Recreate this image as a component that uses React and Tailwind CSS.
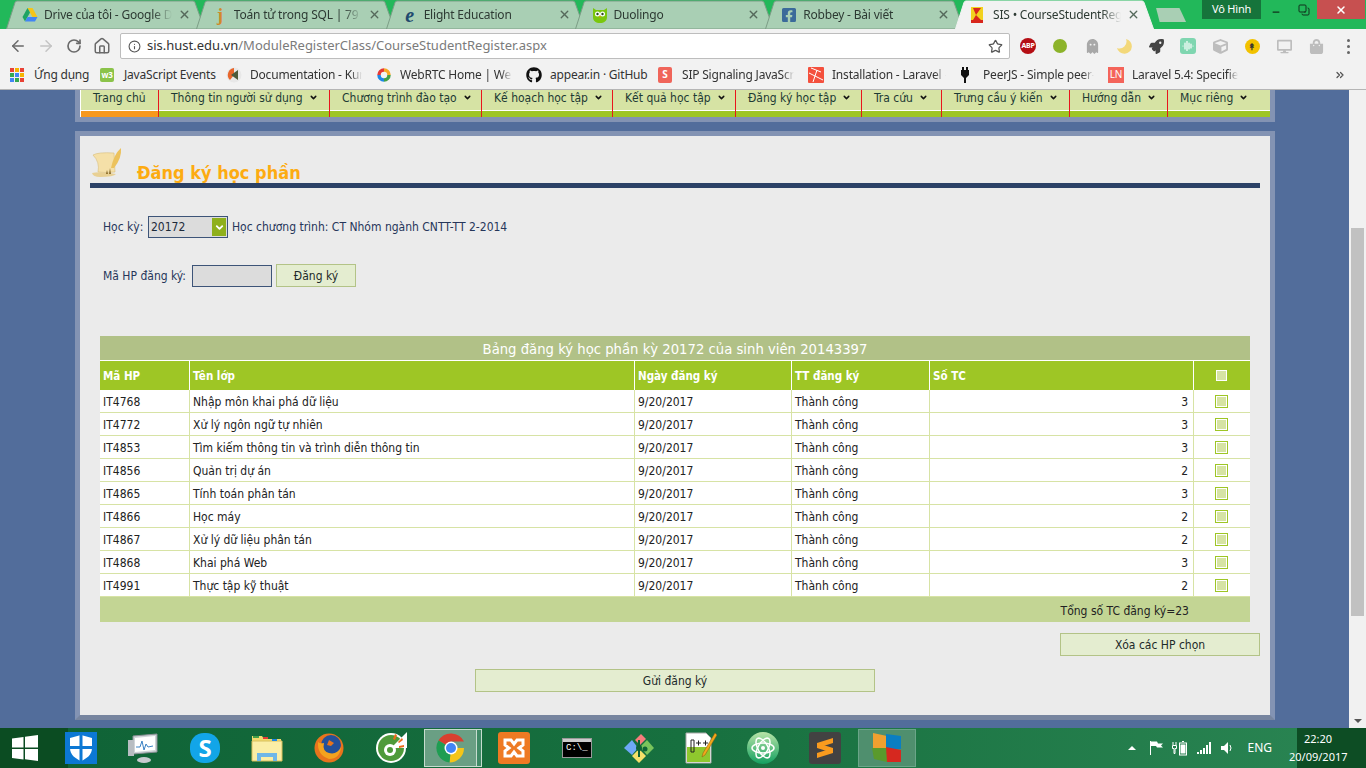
import React from 'react';
import { ArrowLeft, ArrowRight, RotateCw, Home, Star, Info, X, Minus, ChevronDown, ChevronsRight, Copy } from 'lucide-react';
import { FaGithub, FaFacebookSquare, FaRocket, FaGhost, FaShoppingBag, FaCube, FaDesktop } from 'react-icons/fa';

const uiFont = "font-['Noto_Sans',sans-serif] tracking-[-0.2px]";
const pageFont = "font-['DejaVu_Sans_Condensed','DejaVu_Sans',sans-serif] [font-stretch:condensed]";

const DriveIcon = () => (
  <svg width="16" height="16" viewBox="0 0 16 16">
    <path d="M5.500 1h5l5 9h-5z" fill="#f5c518" />
    <path d="M5.500 1L0.500 10l2.500 4.500 5-9z" fill="#1fa463" />
    <path d="M3 14.500h10l2.500-4.500h-10z" fill="#4285f4" />
  </svg>
);

const Duolingo = () => (
  <svg width="18" height="18" viewBox="0 0 18 18">
    <path d="M2 2l3 2h8l3-2v9c0 4-3 6-7 6s-7-2-7-6z" fill="#7ac70c" />
    <circle cx="6.500" cy="8" r="2.500" fill="#fff" />
    <circle cx="11.500" cy="8" r="2.500" fill="#fff" />
    <circle cx="6.500" cy="8" r="1.200" fill="#2a4a1a" />
    <circle cx="11.500" cy="8" r="1.200" fill="#2a4a1a" />
    <path d="M8 10h2l-1 2z" fill="#f49000" />
  </svg>
);

const SisIcon = () => (
  <svg width="12" height="16" viewBox="0 0 12 16">
    <rect width="12" height="16" fill="#f2d21f" />
    <path d="M2 1h8L5 8l5 5H2l3-5z" fill="#d8261c" />
    <rect y="13" width="12" height="3" fill="#d8261c" />
  </svg>
);

const tabs = [
  { title: 'Drive của tôi - Google D', icon: <DriveIcon /> },
  { title: 'Toán tử trong SQL | 79 b', icon: <span className="w-4 text-center text-[18px] leading-none font-bold text-[#d08a2a] font-['Liberation_Serif',serif]">j</span> },
  { title: 'Elight Education', icon: <span className="w-4 text-center text-[20px] leading-none font-bold italic text-[#1f4a6e] font-['Liberation_Serif',serif]">e</span> },
  { title: 'Duolingo', icon: <Duolingo /> },
  { title: 'Robbey - Bài viết', icon: <FaFacebookSquare size={16} color="#3b6a9a" /> },
  { title: 'SIS • CourseStudentRegi', icon: <SisIcon />, active: true },
];

function Tab({ tab, first }) {
  const fill = tab.active ? '#f2f2f2' : '#a9cfb4';
  return (
    <div className={`relative flex h-[29px] w-[199px] shrink-0 items-center pl-[16px] pr-[14px] ${first ? '' : '-ml-[9.200px]'} ${tab.active ? 'z-10' : ''}`}>
      <svg className="absolute inset-0" width="199" height="29" viewBox="0 0 199 29">
        <path d="M0.500 29L9 2.500Q9.500 1 11 1H187Q188.500 1 189 2.500L198.500 29Z" fill={fill} stroke={tab.active ? '#f2f2f2' : '#7c9d86'} />
      </svg>
      <div className="relative flex min-w-0 flex-1 items-center">
        <span className="flex w-[22px] shrink-0 items-center">{tab.icon}</span>
        <span className="w-[128px] overflow-hidden whitespace-nowrap text-[12px] text-[#2d3a33] [mask-image:linear-gradient(to_right,black_85%,transparent)]">{tab.title}</span>
        <X size={13} strokeWidth={2.500} className="ml-auto text-[#55695b]" />
      </div>
    </div>
  );
}

const AppsIcon = () => (
  <div className="grid w-[14px] grid-cols-3 gap-[1px]">
    {['#e94235', '#f6b400', '#e94235', '#34a853', '#4285f4', '#f6b400', '#4285f4', '#34a853', '#e94235'].map((c, i) => (
      <span key={i} className="h-[4px] w-[4px]" style={{ background: c }} />
    ))}
  </div>
);

const W3Icon = () => (
  <span className="flex h-[14px] w-[14px] items-center justify-center rounded-[2px] bg-[#8bc34a] text-[8px] font-bold text-white">w3</span>
);

const KendoIcon = () => (
  <svg width="16" height="16" viewBox="0 0 16 16">
    <circle cx="8" cy="8" r="7.500" fill="#e8e8e8" />
    <path d="M8 1a7 7 0 0 0-4 12l4-5z" fill="#e8662c" />
    <path d="M5 8l7-5v10z" fill="#4d5a3a" />
  </svg>
);

const WebrtcIcon = () => (
  <svg width="16" height="16" viewBox="0 0 16 16" fill="none" strokeWidth="3.500">
    <path d="M3 8a5 5 0 0 1 5-5" stroke="#e53935" />
    <path d="M8 3a5 5 0 0 1 5 5" stroke="#f9a825" />
    <path d="M13 8a5 5 0 0 1-5 5" stroke="#43a047" />
    <path d="M8 13a5 5 0 0 1-5-5" stroke="#1e88e5" />
  </svg>
);

const SipIcon = () => (
  <span className="flex h-[16px] w-[14px] items-center justify-center rounded-[2px] bg-[#f0655a] text-[10px] font-bold text-white">S</span>
);

const LaravelIcon = () => (
  <svg width="16" height="16" viewBox="0 0 16 16">
    <rect width="16" height="16" rx="1" fill="#f4503d" />
    <path d="M3 1l10 4M1 6l14 7M9 3l-4 12" stroke="#fff" strokeWidth="1" />
  </svg>
);

const PeerIcon = () => (
  <svg width="10" height="16" viewBox="0 0 10 16">
    <path d="M2 0h2v3h2V0h2v3h1v5L6 11v5H4v-5L1 8V3h1z" fill="#111" />
  </svg>
);

const LnIcon = () => (
  <span className="flex h-[16px] w-[16px] items-center justify-center bg-[#f4645a] text-[10px] text-white">LN</span>
);

const bookmarks = [
  { title: 'Ứng dụng', icon: <AppsIcon />, iw: 24, w: 66, full: true },
  { title: 'JavaScript Events', icon: <W3Icon />, iw: 24, w: 102, full: true },
  { title: 'Documentation - Kur', icon: <KendoIcon />, iw: 24, w: 126 },
  { title: 'WebRTC Home | Web', icon: <WebrtcIcon />, iw: 24, w: 126 },
  { title: 'appear.in · GitHub', icon: <FaGithub size={16} color="#111" />, iw: 24, w: 108, full: true },
  { title: 'SIP Signaling JavaScri', icon: <SipIcon />, iw: 24, w: 126 },
  { title: 'Installation - Laravel -', icon: <LaravelIcon />, iw: 24, w: 128 },
  { title: 'PeerJS - Simple peer-', icon: <PeerIcon />, iw: 23, w: 125 },
  { title: 'Laravel 5.4: Specified', icon: <LnIcon />, iw: 24, w: 120 },
];

const ChromeBar = () => (
  <div className={`flex h-[90px] shrink-0 flex-col ${uiFont}`}>
    <div className="flex h-[29px] items-start bg-[#22b85a] pl-[6px]">
      {tabs.map((t, i) => <Tab key={t.title} tab={t} first={i === 0} />)}
      <div className="ml-[2px] mt-[8px] h-[14px] w-[30px] bg-[#a9cfb4] [clip-path:polygon(0_0,78%_0,100%_100%,12%_100%)]" />
      <div className="ml-[16px] flex h-[19px] w-[59px] items-center justify-center bg-[#16743b] text-[11px] text-white">Vô Hình</div>
      <div className="flex h-[19px] w-[56px] items-center pl-[10px]">
        <Minus size={10} strokeWidth={3} className="mt-[5px] text-[#10301c]" />
        <Copy size={12} strokeWidth={2} className="ml-[17px] -scale-x-100 -scale-y-100 text-[#10301c]" />
      </div>
      <div className="flex h-[19px] w-[48px] items-center justify-center bg-[#c75050]"><X size={12} strokeWidth={3} className="text-white" /></div>
    </div>
    <div className="flex h-[31px] items-start bg-[#f2f2f2] pl-[9px] pt-[4px]">
      <ArrowLeft size={18} strokeWidth={2} className="mt-[4px] text-[#6a6a6a]" />
      <ArrowRight size={18} strokeWidth={2} className="ml-[10px] mt-[4px] text-[#c4c4c4]" />
      <RotateCw size={16} strokeWidth={2.500} className="ml-[11px] mt-[5px] text-[#6a6a6a]" />
      <Home size={18} strokeWidth={2} className="ml-[11px] mt-[4px] text-[#6a6a6a]" />
      <div className="ml-[9px] flex h-[26px] w-[890px] shrink-0 items-center rounded-[2px] border border-[#bdbdbd] bg-white pl-[7px] pr-[6px]">
        <Info size={13} strokeWidth={2} className="text-[#555]" />
        <span className="ml-[6px] text-[13px] tracking-normal text-[#333]">sis.hust.edu.vn<span className="text-[#7b7b7b]">/ModuleRegisterClass/CourseStudentRegister.aspx</span></span>
        <Star size={15} strokeWidth={2} className="ml-auto text-[#555]" />
      </div>
      <div className="ml-[2px] mt-[5px] flex items-center">
        <div className="flex w-[32px] justify-center">
          <span className="flex h-[16px] w-[16px] items-center justify-center rounded-full bg-[#b50e14] text-[7px] font-bold text-white">ABP</span>
        </div>
        <div className="flex w-[32px] justify-center"><span className="h-[14px] w-[14px] rounded-full bg-[#8cb32a]" /></div>
        <div className="flex w-[32px] justify-center"><FaGhost size={15} color="#a8a8a8" /></div>
        <div className="flex w-[32px] justify-center">
          <svg width="16" height="16" viewBox="0 0 16 16"><path d="M10 1a7.500 7.500 0 1 1-9 9a7 7 0 0 0 9-9z" fill="#f3d87a" /></svg>
        </div>
        <div className="flex w-[32px] justify-center"><FaRocket size={15} color="#444" /></div>
        <div className="flex w-[32px] justify-center">
          <span className="flex h-[16px] w-[16px] items-center justify-center rounded-[3px] bg-[#7fd6b0]">
            <svg width="12" height="10" viewBox="0 0 12 10"><path d="M1 5v0M3 2v6M5 0v10M7 2v6M9 3v4M11 5v0" stroke="#fff" strokeWidth="1.200" strokeLinecap="round" /></svg>
          </span>
        </div>
        <div className="flex w-[32px] justify-center"><FaCube size={15} color="#bdbdbd" /></div>
        <div className="flex w-[32px] justify-center">
          <span className="flex h-[15px] w-[15px] items-center justify-center rounded-full bg-[#f2c200] text-[9px] font-bold leading-none text-[#333]">↟</span>
        </div>
        <div className="flex w-[32px] justify-center"><FaDesktop size={15} color="#bdbdbd" /></div>
        <div className="flex w-[32px] justify-center"><FaShoppingBag size={15} color="#bdbdbd" /></div>
        <div className="flex w-[32px] flex-col items-center gap-[3px]">
          <span className="h-[3px] w-[3px] rounded-full bg-[#666]" />
          <span className="h-[3px] w-[3px] rounded-full bg-[#666]" />
          <span className="h-[3px] w-[3px] rounded-full bg-[#666]" />
        </div>
      </div>
    </div>
    <div className="flex h-[30px] items-center border-b border-[#b5b5b5] bg-[#f2f2f2] pl-[10px]">
      {bookmarks.map((b) => (
        <div key={b.title} className="flex items-center" style={{ width: b.iw + b.w }}>
          <span className="flex shrink-0 items-center" style={{ width: b.iw }}>{b.icon}</span>
          {b.full ? (
            <span className="whitespace-nowrap text-[12px] text-[#333]">{b.title}</span>
          ) : (
            <span className="overflow-hidden whitespace-nowrap text-[12px] text-[#333] [mask-image:linear-gradient(to_right,black_90%,transparent)]" style={{ width: b.w - 14 }}>{b.title}</span>
          )}
        </div>
      ))}
      <ChevronsRight size={12} strokeWidth={2.500} className="ml-[82px] text-[#555]" />
    </div>
  </div>
);

const navItems = [
  { label: 'Trang chủ', w: 'w-[78px]', active: true },
  { label: 'Thông tin người sử dụng', w: 'w-[171px]', caret: true },
  { label: 'Chương trình đào tạo', w: 'w-[152px]', caret: true },
  { label: 'Kế hoạch học tập', w: 'w-[131px]', caret: true },
  { label: 'Kết quả học tập', w: 'w-[123px]', caret: true },
  { label: 'Đăng ký học tập', w: 'w-[126px]', caret: true },
  { label: 'Tra cứu', w: 'w-[80px]', caret: true },
  { label: 'Trưng cầu ý kiến', w: 'w-[128px]', caret: true },
  { label: 'Hướng dẫn', w: 'w-[98px]', caret: true },
  { label: 'Mục riêng', w: 'w-[102px]', caret: true, last: true },
];

const NavBar = () => (
  <div className={`border-x-[5px] border-b-[5px] border-x-[#8393b3] border-b-[#8393b3] bg-white ${pageFont}`}>
    <div className="flex pl-[1px]">
      {navItems.map((n) => (
        <div key={n.label} className={`flex ${n.w} flex-col ${n.last ? '' : 'border-r border-r-[#e8161d]'}`}>
          <div className="flex h-[20px] items-center gap-[6px] bg-[#d6e3a4] pb-[5px] pl-[12px] text-[12px] text-[#1d3a34]">
            <span>{n.label}</span>
            {n.caret && <ChevronDown size={9} strokeWidth={4} className="text-[#111]" />}
          </div>
          <div className={`mt-[1px] h-[6px] ${n.active ? 'bg-[#f7981d]' : 'bg-[#9ec625]'}`} />
        </div>
      ))}
    </div>
  </div>
);

const rows = [
  ['IT4768', 'Nhập môn khai phá dữ liệu', 3],
  ['IT4772', 'Xử lý ngôn ngữ tự nhiên', 3],
  ['IT4853', 'Tìm kiếm thông tin và trình diễn thông tin', 3],
  ['IT4856', 'Quản trị dự án', 2],
  ['IT4865', 'Tính toán phân tán', 3],
  ['IT4866', 'Học máy', 2],
  ['IT4867', 'Xử lý dữ liệu phân tán', 2],
  ['IT4868', 'Khai phá Web', 3],
  ['IT4991', 'Thực tập kỹ thuật', 2],
];

const RegTable = () => (
  <table className="ml-[10px] w-[1150px] table-fixed border-separate border-spacing-0 text-[12px] text-[#222]">
    <colgroup>
      <col className="w-[89px]" />
      <col className="w-[445px]" />
      <col className="w-[157px]" />
      <col className="w-[138px]" />
      <col className="w-[264px]" />
      <col className="w-[57px]" />
    </colgroup>
    <thead>
      <tr className="h-[25px]">
        <th colSpan={6} className="border-b border-b-white bg-[#b1c187] p-0 pt-[2px] text-center text-[14.700px] font-normal text-white">Bảng đăng ký học phần kỳ 20172 của sinh viên 20143397</th>
      </tr>
      <tr className="h-[29px] bg-[#9ec625] text-left text-[11.500px] font-bold text-white">
        <th className="pl-[3px] pt-[3px] font-bold">Mã HP</th>
        <th className="border-l border-l-white pl-[3px] pt-[3px] font-bold">Tên lớp</th>
        <th className="border-l border-l-white pl-[3px] pt-[3px] font-bold">Ngày đăng ký</th>
        <th className="border-l border-l-white pl-[3px] pt-[3px] font-bold">TT đăng ký</th>
        <th className="border-l border-l-white pl-[3px] pt-[3px] font-bold">Số TC</th>
        <th className="border-l border-l-white">
          <span className="ml-[22px] block h-[11px] w-[11px] border border-white bg-[#d6e3a4]" />
        </th>
      </tr>
    </thead>
    <tbody className="bg-white">
      {rows.map((r) => (
        <tr key={r[0]} className="h-[23px]">
          <td className="border-b border-b-[#d7e3a5] pl-[3px] pt-[2px]">{r[0]}</td>
          <td className="border-b border-l border-b-[#d7e3a5] border-l-[#d7e3a5] pl-[3px] pt-[2px]">{r[1]}</td>
          <td className="border-b border-l border-b-[#d7e3a5] border-l-[#d7e3a5] pl-[3px] pt-[2px]">9/20/2017</td>
          <td className="border-b border-l border-b-[#d7e3a5] border-l-[#d7e3a5] pl-[3px] pt-[2px]">Thành công</td>
          <td className="border-b border-l border-b-[#d7e3a5] border-l-[#d7e3a5] pr-[5px] pt-[2px] text-right">{r[2]}</td>
          <td className="border-b border-l border-b-[#d7e3a5] border-l-[#d7e3a5]">
            <span className="ml-[21px] block h-[13px] w-[13px] border border-[#9ec625] bg-[#d6e3a4] outline outline-1 -outline-offset-2 outline-white" />
          </td>
        </tr>
      ))}
    </tbody>
    <tfoot>
      <tr className="h-[25px] bg-[#c3d594]">
        <td colSpan={6} className="pr-[61px] pt-[2px] text-right">Tổng số TC đăng ký=23</td>
      </tr>
    </tfoot>
  </table>
);

const ScrollIcon = () => (
  <svg width="33" height="31" viewBox="0 0 33 31" className="shrink-0">
    <path d="M3 7Q8 4 24 5L25 24Q14 25 8 24Q10 14 3 7z" fill="#f5e0a8" stroke="#d9bd7a" strokeWidth="0.600" />
    <path d="M2 25Q10 23 26 26Q24 29 10 29Q3 29 2 25z" fill="#e8d094" />
    <path d="M21 20Q24 6 31 0Q32 10 24 20z" fill="#ecc25c" />
    <path d="M19 26l1-6 1 6zM16 26l1-4 1 4z" fill="#8a6b2a" />
  </svg>
);

const FormButton = ({ className, children }) => (
  <button className={`flex items-center justify-center border border-[#b3c387] bg-[#e4edd0] text-[12px] text-[#1d2a2a] ${className}`}>{children}</button>
);

const Panel = () => (
  <div className={`mt-[9px] border-[5px] border-[#8393b3] border-b-[#77859f] bg-[#ebebeb] pb-[23px] pl-[10px] pr-[10px] ${pageFont} text-[12px] text-[#26365a]`}>
    <div className="flex h-[52px] items-start border-b-[5px] border-[#2b4166] pt-[12px]">
      <ScrollIcon />
      <h1 className="ml-[14px] mt-[13px] text-[18px] font-bold leading-[24px] text-[#fdab11]">Đăng ký học phần</h1>
    </div>
    <div className="ml-[13px] mt-[28px] flex h-[22px] items-center">
      <span className="w-[45px]">Học kỳ:</span>
      <div className="flex h-[22px] w-[80px] items-center justify-between border border-[#3d5478] bg-[#dcdcdc] pl-[2px] pr-[1px] text-[#1d2a3a]">
        <span>20172</span>
        <span className="flex h-[18px] w-[14px] items-center justify-center bg-[#8fb01b]">
          <ChevronDown size={11} strokeWidth={4} className="text-white" />
        </span>
      </div>
      <span className="ml-[4px]">Học chương trình: CT Nhóm ngành CNTT-TT 2-2014</span>
    </div>
    <div className="ml-[13px] mt-[26px] flex h-[23px] items-center">
      <span className="w-[89px]">Mã HP đăng ký:</span>
      <div className="h-[22px] w-[80px] border border-[#3d5478] bg-[#dcdcdc]" />
      <FormButton className="ml-[4px] h-[23px] w-[80px]">Đăng ký</FormButton>
    </div>
    <div className="mt-[49px]">
      <RegTable />
    </div>
    <div className="mt-[11px] flex justify-end">
      <FormButton className="h-[23px] w-[200px]">Xóa các HP chọn</FormButton>
    </div>
    <div className="mt-[13px] flex justify-center">
      <FormButton className="h-[23px] w-[400px]">Gửi đăng ký</FormButton>
    </div>
  </div>
);

const Scrollbar = () => (
  <div className="flex w-[17px] shrink-0 flex-col items-center bg-[#f1f1f1] pt-[138px]">
    <div className="h-[388px] w-[13px] bg-[#c1c1c1]" />
    <div className="mt-auto mb-[5px] h-0 w-0 border-x-[4px] border-t-[4px] border-x-transparent border-t-[#555]" />
  </div>
);

const WinIcon = ({ size = 26, color = '#fff' }) => (
  <svg width={size} height={size} viewBox="0 0 26 26" fill={color}>
    <path d="M0 3.500L11.500 2v10.500H0zM13 1.800L26 0v12.500H13zM0 14h11.500v10.500L0 23zM13 14h13v12l-13-1.800z" />
  </svg>
);

const Task = ({ children, className = '' }) => (
  <div className={`flex h-[40px] w-[62px] shrink-0 items-center justify-center ${className}`}>{children}</div>
);

const TaskBar = () => (
  <div className="flex h-[40px] shrink-0 items-center bg-gradient-to-r from-[#0f6236] via-[#17703f] to-[#2a8553] font-['Noto_Sans',sans-serif]">
    <div className="flex h-[40px] w-[68px] shrink-0 items-center justify-center bg-[#0b4c22] pr-[18px]"><WinIcon /></div>
    <div className="-ml-[3px] flex h-[32px] w-[32px] shrink-0 items-center justify-center bg-[#0c78d4]">
      <svg width="26" height="28" viewBox="0 0 26 28"><path d="M13 1l11 3v10c0 7-6 11-11 13C8 25 2 21 2 14V4z" fill="#fff" /><path d="M11.500 0h3v28h-3zM0 12h26v3H0z" fill="#0c78d4" /></svg>
    </div>
    <Task className="ml-[15px]">
      <svg width="32" height="32" viewBox="0 0 32 32">
        <path d="M6 4l24-2v18L6 22z" fill="#cfd4d8" stroke="#8a9096" />
        <path d="M8 6l20-2v14L8 20z" fill="#fff" />
        <path d="M9 15l4 0 2-6 2 9 2-6 2 3 5-1" stroke="#3b82c4" fill="none" />
        <path d="M1 8h6v16H1z" fill="#b8bdc2" />
        <ellipse cx="17" cy="28" rx="7" ry="3" fill="#c7cbcf" />
      </svg>
    </Task>
    <Task>
      <span className="flex h-[30px] w-[30px] items-center justify-center rounded-[46%] bg-[#12a5e8] text-[24px] font-bold leading-none text-white">S</span>
    </Task>
    <Task>
      <svg width="32" height="30" viewBox="0 0 32 30">
        <path d="M1 3h10l2 3h17v20H1z" fill="#f2d96d" />
        <path d="M1 8h30v20H1z" fill="#fbeea6" stroke="#d8bf5c" />
        <rect x="2" y="3" width="6" height="2" fill="#43a047" /><rect x="12" y="4" width="5" height="2" fill="#e53935" /><rect x="21" y="6" width="5" height="2" fill="#1e88e5" />
        <path d="M6 28V20h20v8h-4v-4H10v4z" fill="#6fb7e8" />
      </svg>
    </Task>
    <Task>
      <svg width="30" height="30" viewBox="0 0 30 30">
        <circle cx="15" cy="15" r="14.500" fill="#e8741c" />
        <circle cx="17" cy="12" r="10" fill="#24509a" />
        <path d="M4 9Q3 22 15 26Q26 26 27 14Q23 22 15 20Q8 18 10 10Q6 11 4 9z" fill="#f4a21e" />
        <path d="M15 7l5 3-3 3-4-1z" fill="#e8741c" />
      </svg>
    </Task>
    <Task>
      <svg width="32" height="32" viewBox="0 0 32 32">
        <circle cx="16" cy="16" r="15" fill="#fff" />
        <circle cx="16" cy="16" r="13" fill="#4f9a3a" />
        <path d="M16 16L32 0v16z" fill="#fff" />
        <circle cx="15" cy="18" r="6" fill="#fff" /><circle cx="15" cy="18" r="3" fill="#4f9a3a" />
        <path d="M18 7l2-5 2 1-2 5zM23 10l4-4 1 2-4 3zM24 14l5-1v2l-5 1z" fill="#ef6c1a" />
      </svg>
    </Task>
    <div className="ml-[2px] flex h-[38px] w-[53px] shrink-0 items-center justify-center border border-[#c6dccf] bg-[#6a9f84]">
      <svg width="30" height="30" viewBox="0 0 30 30">
        <path d="M15 15L2.500 7.500A14.500 14.500 0 0 1 28 8.500H15z" fill="#d8402f" />
        <path d="M15 15h13a14.500 14.500 0 0 1-14.500 14.500z" fill="#f5c518" />
        <path d="M15 15L13.500 29.500A14.500 14.500 0 0 1 2.500 7.500z" fill="#1f9d52" />
        <circle cx="15" cy="15" r="6.500" fill="#fff" /><circle cx="15" cy="15" r="5" fill="#4285f4" />
      </svg>
    </div>
    <div className="h-[38px] w-[5px] shrink-0 border border-l-0 border-[#c6dccf] bg-[#3f8a66]" />
    <Task className="ml-[2px]">
      <span className="-ml-[2px] flex h-[32px] w-[32px] items-center justify-center rounded-[3px] bg-[#ee7a23]">
        <svg width="24" height="24" viewBox="0 0 24 24"><path d="M3 4h6l3 4 3-4h6v5l-4 3 4 3v5h-6l-3-4-3 4H3v-5l4-3-4-3z" fill="none" stroke="#fff" strokeWidth="3" /></svg>
      </span>
    </Task>
    <Task>
      <div className="w-[30px] border border-[#999] bg-black pb-[4px]">
        <div className="h-[3px] bg-[#ccc]" />
        <span className="block pl-[3px] pt-[2px] font-['Liberation_Mono',monospace] text-[9px] leading-none text-white">C:\_</span>
      </div>
    </Task>
    <Task>
      <svg width="32" height="32" viewBox="0 0 32 32">
        <path d="M12 8l6-6 5 5-6 6z" fill="#f67c7c" />
        <path d="M1 16l8-8 6 8-6 7z" fill="#6ea8f7" />
        <path d="M17 15l7-7 7 8-7 7z" fill="#7ac45c" />
        <path d="M9 24l7-7 7 7-7 7z" fill="#f5e06a" />
        <path d="M15 8h2v17h-2z" fill="#0f6236" /><circle cx="16" cy="16" r="3" fill="#0f6236" /><circle cx="22" cy="17" r="2.500" fill="#0f6236" />
      </svg>
    </Task>
    <Task>
      <svg width="32" height="32" viewBox="0 0 32 32">
        <path d="M1 1h20l5 5v25H1z" fill="#fff" stroke="#aaa" />
        <path d="M2 15h23v15H2z" fill="#8fc82e" />
        <path d="M6 8h3v12H6z" fill="none" stroke="#222" />
        <path d="M11 11h5M13.500 8.500v5M18 11h5M20.500 8.500v5" stroke="#222" />
        <path d="M30 1l2 2-12 20-3 2 1-4z" fill="#f2a71b" stroke="#8a5a10" strokeWidth="0.500" />
      </svg>
    </Task>
    <Task>
      <svg width="32" height="32" viewBox="0 0 32 32">
        <defs><linearGradient id="atom" x1="0" y1="0" x2="0" y2="1"><stop offset="0" stopColor="#b8e4a8" /><stop offset="1" stopColor="#12a060" /></linearGradient></defs>
        <circle cx="16" cy="16" r="16" fill="url(#atom)" />
        <g fill="none" stroke="#fff" strokeWidth="1.500">
          <ellipse cx="16" cy="16" rx="11" ry="5" />
          <ellipse cx="16" cy="16" rx="11" ry="5" transform="rotate(60 16 16)" />
          <ellipse cx="16" cy="16" rx="11" ry="5" transform="rotate(120 16 16)" />
        </g>
        <circle cx="16" cy="16" r="2" fill="#fff" />
      </svg>
    </Task>
    <Task>
      <span className="flex h-[32px] w-[32px] items-center justify-center rounded-[3px] bg-[#424242]">
        <svg width="18" height="22" viewBox="0 0 18 22"><path d="M1 6L17 1v5L1 11zM1 6l16 5v5L1 11zM17 11v5L1 21v-5z" fill="#f99b1e" /></svg>
      </span>
    </Task>
    <div className="ml-[2px] flex h-[38px] w-[58px] shrink-0 items-center justify-center border border-[#6aa588] bg-[#4f8f6e]">
      <svg width="32" height="32" viewBox="0 0 32 32">
        <path d="M2 1l14 3v12H2z" fill="#f0a030" />
        <path d="M15 2l15 2v13H15z" fill="#0a7ec2" />
        <path d="M1 16h15v14L3 27z" fill="#5a9a2c" />
        <path d="M15 15l15 3v12H16z" fill="#d6281f" />
      </svg>
    </div>
    <div className="ml-auto flex h-[40px] items-center text-white">
      <span className="mr-[13px] h-0 w-0 border-x-[4px] border-b-[4px] border-x-transparent border-b-white" />
      <svg width="16" height="16" viewBox="0 0 16 16" fill="none" className="mr-[7px]">
        <path d="M1.500 1v14" stroke="#fff" /><path d="M2 1.500h6l1 2h5l-2 2 2 2H8L7 6H2z" fill="#fff" />
      </svg>
      <svg width="16" height="16" viewBox="0 0 16 16" className="mr-[8px]" fill="none" stroke="#fff">
        <path d="M1 2v3M4 2v3M0.500 5.500h4v3h-1.500v5h-1v-5H.5z" /><rect x="7.500" y="3" width="7" height="12" /><path d="M10 1.500h2" /><rect x="9" y="5" width="4" height="8" fill="#fff" />
      </svg>
      <svg width="16" height="14" viewBox="0 0 16 14" fill="#fff" className="mr-[8px]">
        <path d="M1 11h2v2H1zM4 9h2v4H4zM7 7h2v6H7zM10 4h2v9h-2zM13 1h2v12h-2z" />
      </svg>
      <svg width="14" height="14" viewBox="0 0 14 14" fill="none" className="mr-[13px]">
        <path d="M1 5h3l4-4v12l-4-4H1z" fill="#fff" /><path d="M10 4q2 3 0 6" stroke="#fff" />
      </svg>
      <span className="mr-[25px] text-[12px]">ENG</span>
      <div className="flex h-[40px] w-[69px] flex-col items-start justify-center bg-[#0d4d24] text-[11px] leading-[18px]">
        <span className="-ml-[8px] w-[58px] whitespace-nowrap text-center">22:20</span>
        <span className="-ml-[8px] w-[58px] whitespace-nowrap text-center">20/09/2017</span>
      </div>
    </div>
  </div>
);

export default function App() {
  return (
    <div className="flex h-[768px] w-[1366px] flex-col overflow-hidden">
      <ChromeBar />
      <div className="flex min-h-0 flex-1 bg-[#526d9b]">
        <div className="min-w-0 flex-1 pl-[75px] pr-[74px]">
          <NavBar />
          <Panel />
        </div>
        <Scrollbar />
      </div>
      <TaskBar />
    </div>
  );
}
